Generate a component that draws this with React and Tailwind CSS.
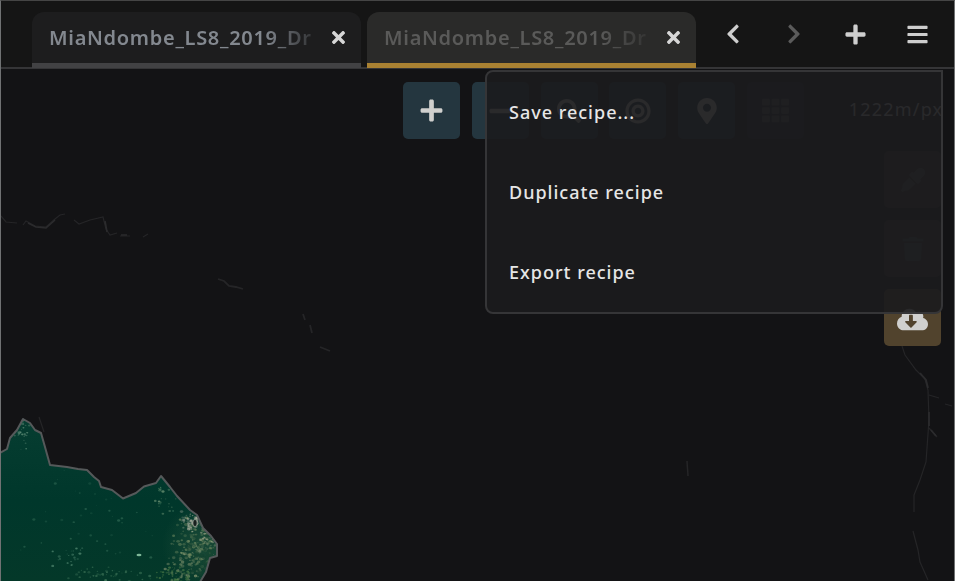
import {
  FaBars, FaBullseye, FaChevronLeft, FaChevronRight, FaCloudDownloadAlt, FaEyeDropper,
  FaMapMarkerAlt, FaMinus, FaPlus, FaSearch, FaTh, FaTimes, FaTrash,
} from 'react-icons/fa'

// Outline of the mosaic's visible area
const LAND = 'M0 453 L7 449 L10 438 L17 430 L23 419 L30 423 L35 430 L41 433 L45 447 L50 465 L67 467 L78 469 L87 470 L94 477 L99 481 L101 487 L112 490 L123 498.500 L136 493 L144 486.500 L156 483 L161 476 L170 487 L177 496 L190 510 L197 515 L203 528 L211 536 L217 544 L217 556 L210 558 L206 572 L200 582 L0 582 Z'

// Deterministic speckles: [x, y, radius, opacity]
const speckles = (count, seed, cx, cy, sx, sy, scale = 1) => {
  let s = seed
  const next = () => {
    s = (s * 16807) % 2147483647
    return s / 2147483647
  }
  return Array.from({ length: count }, () => [
    cx + (next() + next() - 1) * sx,
    cy + (next() + next() - 1) * sy,
    (0.5 + next() * 1.1) * scale,
    0.2 + next() * 0.4,
  ])
}

const GROUPS = [
  { color: '#7f9468', dots: speckles(130, 7177, 198, 540, 26, 34, 1.2) },
  { color: '#8c9a74', dots: speckles(80, 99173, 188, 566, 24, 24, 1.2) },
  { color: '#c2bfae', dots: speckles(60, 91345, 193, 521, 14, 14, 1.3) },
  { color: '#b5b596', dots: speckles(26, 47123, 205, 542, 13, 14, 1.1) },
  { color: '#174431', dots: speckles(70, 64031, 202, 556, 20, 24, 1.8) },
  { color: '#5f8d4f', dots: speckles(50, 37373, 174, 577, 22, 14) },
  { color: '#8fb28c', dots: speckles(20, 41711, 167, 502, 14, 16) },
  { color: '#79a38b', dots: speckles(26, 55121, 23, 435, 9, 18) },
  { color: '#6ba287', dots: speckles(22, 80111, 70, 557, 20, 12) },
  { color: '#4c8263', dots: speckles(45, 22299, 112, 574, 46, 12) },
  { color: '#3a735c', dots: speckles(50, 123457, 90, 515, 95, 60) },
]

const Map = () => (
  <svg className="col-start-1 row-start-1 h-[581px] w-[955px]" viewBox="0 0 955 581" fill="none">
    <defs>
      <clipPath id="land"><path d={LAND} /></clipPath>
      <radialGradient id="sand" cx="204" cy="545" r="42" gradientUnits="userSpaceOnUse">
        <stop offset="0" stopColor="#4b6f52" stopOpacity="0.35" />
        <stop offset="1" stopColor="#4b6f52" stopOpacity="0" />
      </radialGradient>
      <linearGradient id="green" x1="0" y1="420" x2="0" y2="581" gradientUnits="userSpaceOnUse">
        <stop offset="0" stopColor="#063d31" />
        <stop offset="0.5" stopColor="#00372b" />
        <stop offset="1" stopColor="#043829" />
      </linearGradient>
    </defs>
    <g stroke="#252527" strokeWidth="1.200">
      <path d="M1 216 L6 222 L17 223 M23 225 L26 221 L35 226 L46 227 L55 219 L60 215 L65 214 M74 220 L79 224 L90 220 L103 217 L106 229 L110 235 L117 233 M120 236 H130 M143 237 L148 234" />
      <path d="M28 223 L36 227 L46 228 L55 220 M105 221 L107 232 M121 235 H127" stroke="#2b2b2d" strokeWidth="1.600" />
      <path d="M218 279 L224 281 L229 286 L236 287 L243 289 M303 314 L305 320 M310 325 L312 333 M320 347 L330 351" strokeWidth="1.800" />
      <path d="M687 461 L688 476" strokeWidth="1.500" />
      <path d="M902 346 L905 355 L916 370 L925 379 L928 390 L929 420 L926 462 L920 480 L914 495 L914 512 M913 531 L918 550 L920 562 L928 580 M929 395 L939 398 M945 404 L952 406 M929 428 L937 437" />
      <path d="M920 373 L926 380 L928 388 M929 412 V426 M931 430 L936 436" stroke="#2b2b2d" strokeWidth="1.800" />
      <path d="M39 417 L44 432" />
    </g>
    <path d={LAND} fill="url(#green)" />
    <g clipPath="url(#land)">
      <rect x="140" y="490" width="80" height="91" fill="url(#sand)" />
      {GROUPS.map(({ color, dots }) => (
        <g key={color} fill={color}>
          {dots.map(([x, y, r, o], i) => (
            <ellipse key={i} cx={x} cy={y} rx={r} ry={r * 0.8} opacity={o} />
          ))}
        </g>
      ))}
      <ellipse cx="195" cy="523" rx="2.200" ry="3.600" fill="#18211e" stroke="#9ca89c" strokeOpacity="0.8" />
      <ellipse cx="139" cy="555" rx="2.500" ry="1.200" fill="#7fb899" />
    </g>
    <path d={LAND} stroke="#55595a" strokeWidth="2" strokeLinejoin="round" />
  </svg>
)

const Tab = ({ active }) => (
  <div className={`box-border flex h-14 w-[329px] items-center rounded-t-xl border-b-[5px] pl-[17px] ${active ? 'border-[#a98132] bg-[#2a2a29]' : 'border-[#424244] bg-[#1d1d1e]'}`}>
    <div className={`w-[262px] overflow-hidden whitespace-nowrap text-[20px] font-semibold leading-8 tracking-[0.700px] [mask-image:linear-gradient(to_right,black_82%,transparent_106%)] ${active ? 'text-[#5a5a59]' : 'text-[#83888f]'}`}>
      MiaNdombe_LS8_2019_Dry
    </div>
    <FaTimes className="ml-[18px] size-[19px] text-[#d6d6d6]" />
  </div>
)

const MapButton = ({ icon: Icon, className = 'bg-[#24363f]', size = 'size-6' }) => (
  <div className={`flex size-[57px] items-center justify-center rounded-[5px] text-[#d0d0ce] ${className}`}>
    <Icon className={size} />
  </div>
)

const Header = () => (
  <header className="flex h-[69px] items-start border-b-2 border-[#353537] bg-[#151515] pl-8 pt-3">
    <div className="flex gap-[6px]">
      <Tab />
      <Tab active />
    </div>
    <nav className="flex pl-[6px] pt-[11px] text-[#cecece]">
      <span className="flex w-[61px] justify-center"><FaChevronLeft className="size-[22px]" /></span>
      <span className="flex w-[61px] justify-center text-[#5b5b5b]"><FaChevronRight className="size-[22px]" /></span>
      <span className="flex w-[62px] justify-center"><FaPlus className="size-[23px]" /></span>
      <span className="flex w-[62px] justify-center"><FaBars className="size-[23px]" /></span>
    </nav>
  </header>
)

const Toolbar = () => (
  <div className="flex h-[70px] items-start gap-[11.8px] pl-[403px] pt-[13px]">
    <MapButton icon={FaPlus} size="size-[25px]" />
    <MapButton icon={FaMinus} />
    <MapButton icon={FaSearch} />
    <MapButton icon={FaBullseye} size="size-[26px]" />
    <MapButton icon={FaMapMarkerAlt} size="size-[26px]" />
    <MapButton icon={FaTh} className="bg-[#1b2227] !text-[#4a5053]" size="size-[27px]" />
    <div className="-mr-4 ml-[33px] pt-[11px] text-[18px] leading-8 tracking-[1.200px] text-[#c4c4c4]">1222m/px</div>
  </div>
)

const SideTools = () => (
  <div className="flex flex-col items-end gap-3 pr-[14px] pt-3">
    <MapButton icon={FaEyeDropper} className="bg-[#342f28] !text-[#555]" />
    <MapButton icon={FaTrash} className="bg-[#342f28] !text-[#454b51]" />
    <MapButton icon={FaCloudDownloadAlt} className="bg-[#51432d] pt-1" size="h-[25px] w-[31px]" />
  </div>
)

const Menu = () => (
  <ul className="absolute left-[485px] top-[70px] flex h-[244px] w-[458px] flex-col rounded-lg rounded-tr-none border-2 border-[#353537] bg-[#1b1b1d]/92 pl-[22px] text-[18px] font-medium tracking-[1px] text-[#e6e6e6]">
    {['Save recipe...', 'Duplicate recipe', 'Export recipe'].map((label) => (
      <li key={label} className="flex h-20 items-center pt-px">{label}</li>
    ))}
  </ul>
)

export default function App() {
  return (
    <div className="relative grid h-[581px] w-[955px] overflow-hidden bg-[#131315] font-['Noto_Sans','Open_Sans',sans-serif]">
      <Map />
      <div className="col-start-1 row-start-1 min-w-0">
        <Header />
        <Toolbar />
        <SideTools />
      </div>
      <Menu />
      <div className="pointer-events-none absolute inset-0 border-x border-t border-l-[#707273] border-r-[#707273] border-t-[#454545]" />
    </div>
  )
}
